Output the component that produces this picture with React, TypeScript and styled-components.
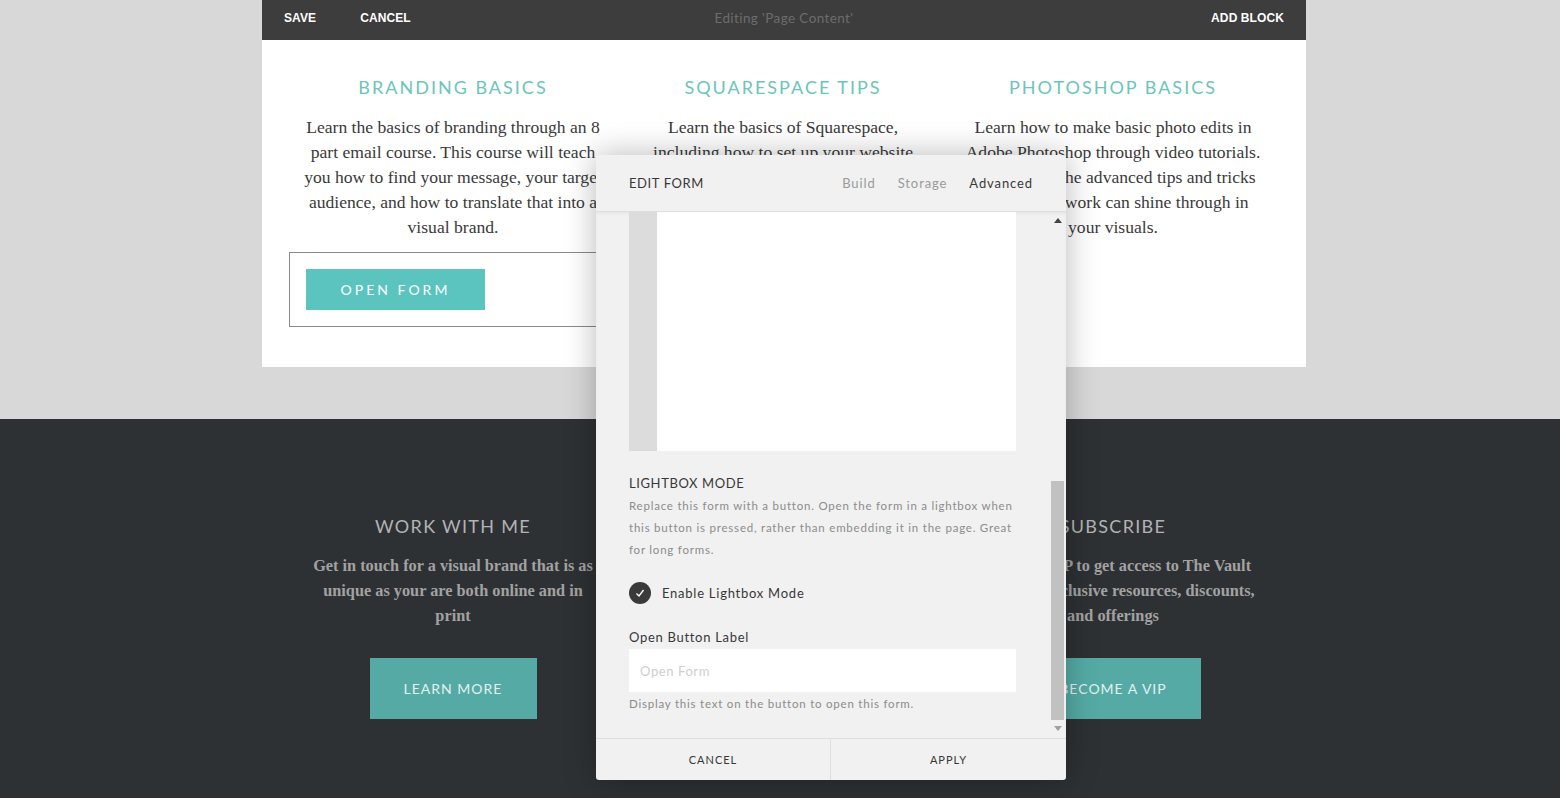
import React from "react";
import styled, { createGlobalStyle } from "styled-components";

const GlobalStyle = createGlobalStyle`
  html, body { margin: 0; padding: 0; }
  body {
    width: 1560px;
    height: 798px;
    overflow: hidden;
    background: #d8d8d8;
    font-family: Lato, "Open Sans", sans-serif;
  }
  * { box-sizing: border-box; }
`;

const Page = styled.div`
  position: relative;
  width: 1560px;
  height: 798px;
  overflow: hidden;
  background: #d8d8d8;
  display: flex;
  flex-direction: column;
`;

const Frame = styled.div`
  width: 1044px;
  margin-left: 262px;
`;

const TopBar = styled.header`
  height: 40px;
  background: #3d3d3d;
  display: grid;
  grid-template-columns: 1fr auto 1fr;
  align-items: center;
  padding: 0 22px 4px;
`;

const TopActions = styled.div<{ $end?: boolean }>`
  display: flex;
  gap: 44px;
  justify-content: ${(p) => (p.$end ? "flex-end" : "flex-start")};
`;

const TopButton = styled.span`
  font-family: "Liberation Sans", Arial, sans-serif;
  font-weight: 700;
  font-size: 12px;
  color: #ffffff;
  letter-spacing: 0.1px;
`;

const TopTitle = styled.span`
  font-family: Lato, sans-serif;
  font-size: 13.5px;
  color: #6c6c6c;
  letter-spacing: 0.4px;
`;

const ContentArea = styled.section`
  height: 327px;
  background: #ffffff;
  padding: 35px 0 0 26px;
  display: grid;
  grid-template-columns: repeat(3, 330px);
  align-items: start;
`;

const Gap = styled.div`
  height: 52px;
`;

const DarkSection = styled.section`
  flex: 1;
  background: #2d3133;
`;

const DarkGrid = styled.div`
  width: 1044px;
  margin-left: 262px;
  padding: 95px 0 0 26px;
  display: grid;
  grid-template-columns: repeat(3, 330px);
`;

const Column = styled.div`
  display: flex;
  flex-direction: column;
  align-items: center;
  text-align: center;
`;

const Heading = styled.h2<{ $dark?: boolean }>`
  margin: 0;
  font-family: Lato, sans-serif;
  font-weight: 400;
  font-size: 18px;
  line-height: 24px;
  letter-spacing: ${(p) => (p.$dark ? "1.3px" : "2px")};
  color: ${(p) => (p.$dark ? "#b3b3b3" : "#6cc5bb")};
  white-space: nowrap;
`;

const Body = styled.p<{ $dark?: boolean }>`
  margin: ${(p) => (p.$dark ? "15px" : "16px")} 0 0;
  font-family: "Liberation Serif", "Times New Roman", serif;
  font-size: ${(p) => (p.$dark ? "16.3px" : "17.6px")};
  font-weight: ${(p) => (p.$dark ? 700 : 400)};
  line-height: 25px;
  color: ${(p) => (p.$dark ? "#a2a2a2" : "#3a3a3a")};
  white-space: nowrap;
`;

const FormBox = styled.div`
  align-self: stretch;
  margin: 12px 0 0 1px;
  border: 1px solid #8a8a8a;
  padding: 16px;
  display: flex;
`;

const TealButton = styled.div<{ $w: number; $h: number; $dark?: boolean }>`
  width: ${(p) => p.$w}px;
  height: ${(p) => p.$h}px;
  background: ${(p) => (p.$dark ? "#55aaa6" : "#5cc4bf")};
  color: ${(p) => (p.$dark ? "#e2f1ef" : "#ffffff")};
  display: flex;
  align-items: center;
  justify-content: center;
  font-family: Lato, sans-serif;
  font-size: 14px;
  letter-spacing: ${(p) => (p.$dark ? "1px" : "3px")};
  white-space: nowrap;
`;

const DarkButtonWrap = styled.div`
  margin-top: 30px;
`;

/* ---------- Dialog ---------- */

const Dialog = styled.div`
  position: absolute;
  left: 596px;
  top: 155px;
  width: 470px;
  height: 625px;
  background: #f1f1f1;
  border-radius: 3px;
  box-shadow: 0 0 32px rgba(0, 0, 0, 0.28);
  display: flex;
  flex-direction: column;
  font-family: Lato, sans-serif;
  overflow: hidden;
`;

const DialogHeader = styled.div`
  height: 57px;
  flex: none;
  border-bottom: 1px solid #dedede;
  padding: 0 33px;
  display: flex;
  align-items: center;
  justify-content: space-between;
`;

const DialogTitle = styled.span`
  font-size: 13px;
  letter-spacing: 0.6px;
  color: #383838;
`;

const Tabs = styled.div`
  display: flex;
  gap: 22px;
`;

const Tab = styled.span<{ $active?: boolean }>`
  font-size: 13px;
  letter-spacing: 0.9px;
  color: ${(p) => (p.$active ? "#383838" : "#9a9a9a")};
`;

const DialogBody = styled.div`
  flex: 1;
  display: flex;
  justify-content: space-between;
  overflow: hidden;
  box-shadow: inset 0 2px 3px rgba(0, 0, 0, 0.04);
`;

const ContentCol = styled.div`
  width: 420px;
  padding-left: 33px;
  display: flex;
  flex-direction: column;
`;

const Preview = styled.div`
  height: 239px;
  display: flex;
  background: #ffffff;
`;

const PreviewStrip = styled.div`
  width: 28px;
  background: #dcdcdc;
`;

const SectionTitle = styled.div`
  margin-top: 24px;
  font-size: 13px;
  line-height: 16px;
  letter-spacing: 0.6px;
  color: #383838;
`;

const Description = styled.div`
  margin-top: 4px;
  font-size: 11.5px;
  line-height: 22px;
  letter-spacing: 0.78px;
  color: #8c8c8c;
  white-space: nowrap;
`;

const CheckRow = styled.div`
  margin-top: 21px;
  display: flex;
  align-items: center;
  gap: 11px;
  height: 22px;
`;

const CheckCircle = styled.span`
  width: 22px;
  height: 22px;
  border-radius: 50%;
  background: #3a3a3a;
  display: flex;
  align-items: center;
  justify-content: center;
`;

const CheckLabel = styled.span`
  font-size: 13px;
  letter-spacing: 0.75px;
  color: #383838;
`;

const FieldLabel = styled.div`
  margin-top: 25px;
  font-size: 13px;
  line-height: 16px;
  letter-spacing: 0.7px;
  color: #383838;
`;

const TextInput = styled.div`
  margin-top: 4px;
  height: 43px;
  background: #ffffff;
  padding-left: 11px;
  display: flex;
  align-items: center;
  font-size: 13px;
  letter-spacing: 0.6px;
  color: #cfcfcf;
`;

const HelpText = styled.div`
  margin-top: 5px;
  font-size: 11.5px;
  line-height: 14px;
  letter-spacing: 0.78px;
  color: #8c8c8c;
`;

const ScrollRail = styled.div`
  width: 13px;
  margin-right: 2px;
  display: flex;
  flex-direction: column;
  align-items: center;
`;

const ArrowBox = styled.div`
  height: 16px;
  width: 13px;
  display: flex;
  align-items: center;
  justify-content: center;
`;

const Thumb = styled.div`
  margin-top: 253px;
  width: 13px;
  height: 239px;
  background: #c1c1c1;
`;

const DialogFooter = styled.div`
  height: 42px;
  flex: none;
  border-top: 1px solid #dedede;
  display: grid;
  grid-template-columns: 235px 1fr;
`;

const FooterButton = styled.div<{ $divider?: boolean }>`
  display: flex;
  align-items: center;
  justify-content: center;
  font-size: 11px;
  letter-spacing: 1px;
  color: #383838;
  border-right: ${(p) => (p.$divider ? "1px solid #dedede" : "none")};
`;

const Arrow = ({ up, color }: { up?: boolean; color: string }) => (
  <svg width="8" height="5" viewBox="0 0 8 5">
    <polygon points={up ? "0,5 8,5 4,0" : "0,0 8,0 4,5"} fill={color} />
  </svg>
);

export default function App() {
  return (
    <>
      <GlobalStyle />
      <Page>
        <Frame>
          <TopBar>
            <TopActions>
              <TopButton>SAVE</TopButton>
              <TopButton>CANCEL</TopButton>
            </TopActions>
            <TopTitle>Editing 'Page Content'</TopTitle>
            <TopActions $end>
              <TopButton>ADD BLOCK</TopButton>
            </TopActions>
          </TopBar>
          <ContentArea>
            <Column>
              <Heading>BRANDING BASICS</Heading>
              <Body>
                Learn the basics of branding through an 8<br />
                part email course. This course will teach<br />
                you how to find your message, your target<br />
                audience, and how to translate that into a<br />
                visual brand.
              </Body>
              <FormBox>
                <TealButton $w={179} $h={41}>OPEN FORM</TealButton>
              </FormBox>
            </Column>
            <Column>
              <Heading>SQUARESPACE TIPS</Heading>
              <Body>
                Learn the basics of Squarespace,<br />
                including how to set up your website
              </Body>
            </Column>
            <Column>
              <Heading>PHOTOSHOP BASICS</Heading>
              <Body>
                Learn how to make basic photo edits in<br />
                Adobe Photoshop through video tutorials.<br />
                Try some of the advanced tips and tricks<br />
                so that your work can shine through in<br />
                your visuals.
              </Body>
            </Column>
          </ContentArea>
        </Frame>
        <Gap />
        <DarkSection>
          <DarkGrid>
            <Column>
              <Heading $dark>WORK WITH ME</Heading>
              <Body $dark>
                Get in touch for a visual brand that is as<br />
                unique as your are both online and in<br />
                print
              </Body>
              <DarkButtonWrap>
                <TealButton $dark $w={167} $h={61}>LEARN MORE</TealButton>
              </DarkButtonWrap>
            </Column>
            <Column />
            <Column>
              <Heading $dark>SUBSCRIBE</Heading>
              <Body $dark>
                Become a VIP to get access to The Vault<br />
                filled with exclusive resources, discounts,<br />
                and offerings
              </Body>
              <DarkButtonWrap>
                <TealButton $dark $w={176} $h={61}>BECOME A VIP</TealButton>
              </DarkButtonWrap>
            </Column>
          </DarkGrid>
        </DarkSection>

        <Dialog>
          <DialogHeader>
            <DialogTitle>EDIT FORM</DialogTitle>
            <Tabs>
              <Tab>Build</Tab>
              <Tab>Storage</Tab>
              <Tab $active>Advanced</Tab>
            </Tabs>
          </DialogHeader>
          <DialogBody>
            <ContentCol>
              <Preview>
                <PreviewStrip />
              </Preview>
              <SectionTitle>LIGHTBOX MODE</SectionTitle>
              <Description>
                Replace this form with a button. Open the form in a lightbox when<br />
                this button is pressed, rather than embedding it in the page. Great<br />
                for long forms.
              </Description>
              <CheckRow>
                <CheckCircle>
                  <svg width="10" height="10" viewBox="0 0 10 10">
                    <polyline
                      points="1.5,5.5 4,8 8.5,2"
                      fill="none"
                      stroke="#ffffff"
                      strokeWidth="1.3"
                    />
                  </svg>
                </CheckCircle>
                <CheckLabel>Enable Lightbox Mode</CheckLabel>
              </CheckRow>
              <FieldLabel>Open Button Label</FieldLabel>
              <TextInput>Open Form</TextInput>
              <HelpText>Display this text on the button to open this form.</HelpText>
            </ContentCol>
            <ScrollRail>
              <ArrowBox>
                <Arrow up color="#444" />
              </ArrowBox>
              <Thumb />
              <ArrowBox>
                <Arrow color="#a0a0a0" />
              </ArrowBox>
            </ScrollRail>
          </DialogBody>
          <DialogFooter>
            <FooterButton $divider>CANCEL</FooterButton>
            <FooterButton>APPLY</FooterButton>
          </DialogFooter>
        </Dialog>
      </Page>
    </>
  );
}
